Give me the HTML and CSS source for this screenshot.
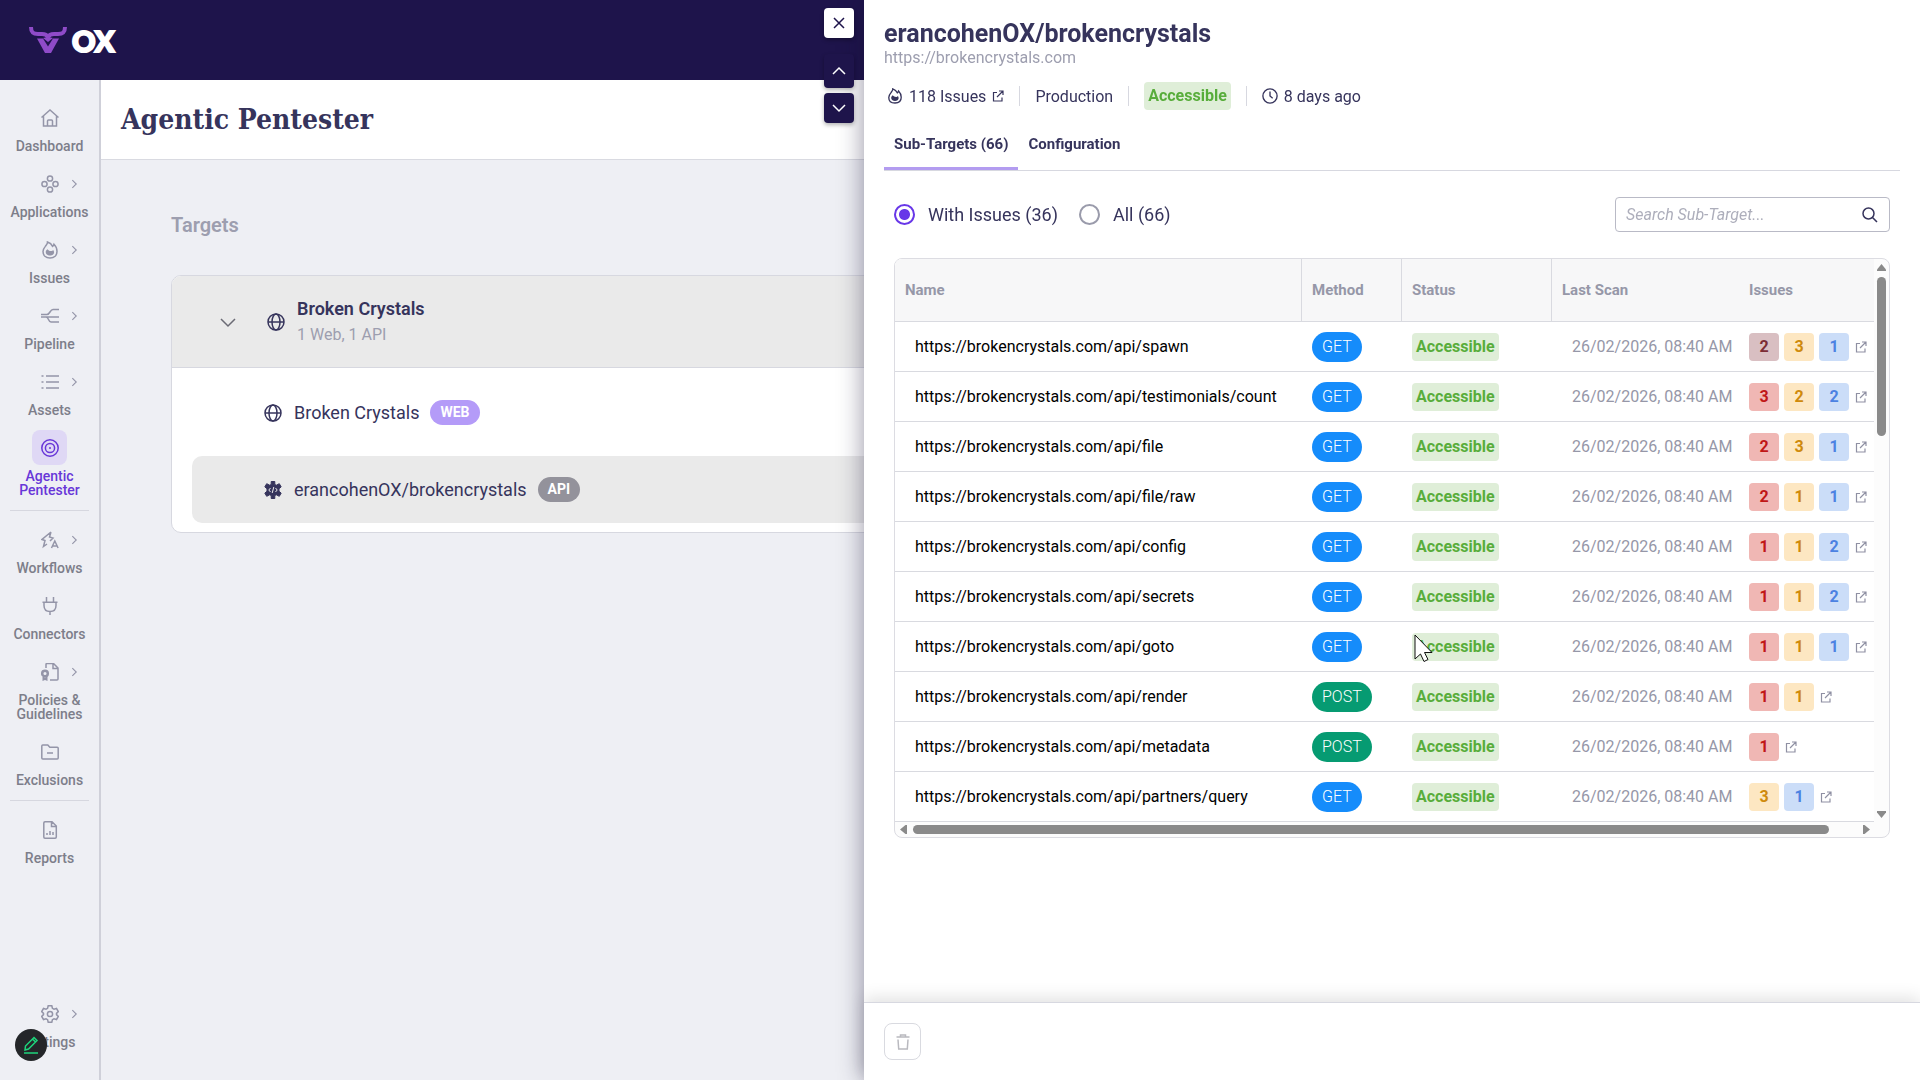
FILE: index.html
```html
<!DOCTYPE html>
<html lang="en">
<head>
  <meta charset="UTF-8">
  <meta name="viewport" content="width=device-width, initial-scale=1.0">
  <title>Agentic Pentester</title>
  <link rel="stylesheet" href="styles.css">
</head>
<body>
  <!-- shared icons -->
  <svg class="sprite" aria-hidden="true">
    <symbol id="chevron" viewBox="0 0 18 18"><path d="M6 2l7 7-7 7"/></symbol>
    <symbol id="flame" viewBox="0 0 18 18">
      <path d="M6.500 1c.2 1.800-1 2.800-2.200 4.400C3 7 2 8.500 2 10.600c0 3.700 2.700 6.300 7 6.300s7-2.600 7-6.500c0-3-1.200-5.300-3-7.100-.3 1.200-.7 1.700-1.400 2.100C10.700 3.400 8.600 1.700 6.500 1z"/>
      <path class="solid" d="M6.500 8.200c-1.400 1-2 2.100-1.700 3.500.4 1.800 2 2.800 4.200 2.800s4.100-1.200 4.100-3c0-.9-.3-1.700-.9-2.400-.5.700-1 1-1.700 1-1.600.1-3-.6-4-1.900z"/>
    </symbol>
    <symbol id="globe" viewBox="0 0 18 18">
      <circle cx="9" cy="9" r="8"/><ellipse cx="9" cy="9" rx="4" ry="8"/><path d="M1 9h16"/>
    </symbol>
    <symbol id="external" viewBox="0 0 12 12"><path d="M5 2.500H1.500v8.500h8.500V7.500M7 1h4v4M11 1L5 7"/></symbol>
  </svg>

  <header class="topbar">
    <svg class="logo-mark" viewBox="0 0 38 28">
      <path class="horns" d="M2 1c0 6 3 7 7 7h4c3 0 5 1 6 3 1-2 3-3 6-3h4c4 0 7-1 7-7"/>
      <path class="face" d="M8 12.500h6l5 8 5-8h6l-8 14.500h-6z"/>
      <path class="face" d="M14 12l5 4 5-4-5-1z"/>
    </svg>
    <span class="logo-text">OX</span>
  </header>

  <div class="layout">
    <nav class="sidebar">
      <a class="nav-item" href="#">
        <span class="nav-icon"><svg class="icon" viewBox="0 0 18 18"><path d="M.5 8.500L9 1l8.500 7.500M2.500 7v10h13V7M6.500 17v-5q0-1 1-1h3q1 0 1 1v5"/></svg></span>
        Dashboard
      </a>
      <a class="nav-item" href="#">
        <span class="nav-icon"><svg class="icon" viewBox="0 0 18 18"><circle cx="9" cy="3.500" r="2.600"/><circle cx="3.500" cy="9" r="2.600"/><circle cx="14.500" cy="9" r="2.600"/><circle cx="9" cy="14.500" r="2.600"/></svg><svg class="more"><use href="#chevron"/></svg></span>
        Applications
      </a>
      <a class="nav-item" href="#">
        <span class="nav-icon"><svg class="icon"><use href="#flame"/></svg><svg class="more"><use href="#chevron"/></svg></span>
        Issues
      </a>
      <a class="nav-item" href="#">
        <span class="nav-icon"><svg class="icon" viewBox="0 0 18 18"><path d="M0 7.500h6c3 0 3-5 6-5h6M0 10h18M5 10c3 0 2 5 5 5h8"/></svg><svg class="more"><use href="#chevron"/></svg></span>
        Pipeline
      </a>
      <a class="nav-item" href="#">
        <span class="nav-icon"><svg class="icon" viewBox="0 0 18 18"><path d="M5 3h13M5 9h13M5 15h13M.5 3h2M.5 9h2M.5 15h2"/></svg><svg class="more"><use href="#chevron"/></svg></span>
        Assets
      </a>
      <a class="nav-item active" href="#">
        <span class="nav-icon"><svg class="icon" viewBox="0 0 18 18"><circle cx="9" cy="9" r="8.200"/><circle cx="9" cy="9" r="4.600"/><circle class="solid" cx="9" cy="9" r="1"/></svg></span>
        Agentic Pentester
      </a>
      <hr class="nav-line">
      <a class="nav-item" href="#">
        <span class="nav-icon"><svg class="icon" viewBox="0 0 18 18"><path d="M10 1L1 8.500l3 1L2.500 15.500 6 13M10 1L8.500 6l3.500 1-3 3M10.500 17l3.300-7 3.300 7M11.500 15h4.500"/></svg><svg class="more"><use href="#chevron"/></svg></span>
        Workflows
      </a>
      <a class="nav-item" href="#">
        <span class="nav-icon"><svg class="icon" viewBox="0 0 18 18"><path d="M5.500 0v5M12.500 0v5M1.500 5.200h15M3 5.500v3c0 4 2.500 6 6 6s6-2 6-6v-3M9 14.500V18"/></svg></span>
        Connectors
      </a>
      <a class="nav-item" href="#">
        <span class="nav-icon"><svg class="icon" viewBox="0 0 18 18"><path d="M5 5V1.500q0-1 1-1h6.500L17 5v11q0 1-1 1H9M12 1v4.500h4.500"/><circle class="seal" cx="4" cy="10.500" r="2.800"/><path class="solid" d="M1.500 13.500v4.500L4 17l2.500 1v-4.500L4 14.500z"/></svg><svg class="more"><use href="#chevron"/></svg></span>
        Policies &amp; Guidelines
      </a>
      <a class="nav-item" href="#">
        <span class="nav-icon"><svg class="icon" viewBox="0 0 18 18"><path d="M.800 3q0-1 1-1h5l2 2.300h7.400q1 0 1 1V15q0 1-1 1H1.800q-1 0-1-1zM6 10h6"/></svg></span>
        Exclusions
      </a>
      <hr class="nav-line">
      <a class="nav-item" href="#">
        <span class="nav-icon"><svg class="icon" viewBox="0 0 18 18"><path d="M2.800 2q0-1.200 1.200-1.200h7L15.300 5v11q0 1.200-1.200 1.200H4q-1.200 0-1.200-1.200zM10.500 1v4.500H15M6 14v-2M9 14v-4M12 14v-3"/></svg></span>
        Reports
      </a>
      <a class="nav-item nav-settings" href="#">
        <span class="nav-icon"><svg class="icon" viewBox="0 0 18 18"><path d="M7.200.8h3.600l.6 2.500 1.600.9 2.500-.7 1.800 3.100L15.500 8.400v1.200l1.800 1.800-1.800 3.100-2.500-.7-1.600.9-.6 2.500H7.200l-.6-2.500-1.600-.9-2.500.7L.700 11.400l1.800-1.800V8.400L.700 6.600l1.800-3.100 2.500.7 1.600-.9z"/><circle cx="9" cy="9" r="2.600"/></svg><svg class="more"><use href="#chevron"/></svg></span>
        Settings
      </a>
      <button class="edit-button" aria-label="Edit">
        <svg viewBox="0 0 16 18"><path d="M2 14l.5-4L11 1.500l3 3L5.500 13zM9.500 3l3 3M1 17h14"/></svg>
      </button>
    </nav>

    <main class="page">
      <div class="page-head"><h1>Agentic Pentester</h1></div>
      <section class="targets">
        <h2>Targets</h2>
        <div class="card">
          <div class="group">
            <svg class="group-arrow"><use href="#chevron"/></svg>
            <svg class="target-icon"><use href="#globe"/></svg>
            <div class="group-text">
              <strong>Broken Crystals</strong>
              <span>1 Web, 1 API</span>
            </div>
          </div>
          <div class="target">
            <svg class="target-icon"><use href="#globe"/></svg>
            <span>Broken Crystals</span>
            <span class="tag web">WEB</span>
          </div>
          <div class="target selected">
            <svg class="target-icon" viewBox="0 0 18 18"><path class="gear" d="M7.200.5h3.600v3l1.500.7 3-1.500 1.900 3.200L15 7.700v2.600l2.200 1.800-1.900 3.200-3-1.500-1.500.7v3H7.200v-3l-1.500-.7-3 1.500L.800 12.100 3 10.300V7.700L.800 5.900l1.900-3.200 3 1.500 1.500-.7z"/><path class="code" d="M6.500 7L4.800 9l1.700 2M11.500 7l1.700 2-1.700 2M9.800 6L8.200 12"/></svg>
            <span>erancohenOX/brokencrystals</span>
            <span class="tag api">API</span>
          </div>
        </div>
      </section>
    </main>
  </div>

  <aside class="drawer">
    <div class="drawer-buttons">
      <button class="close" aria-label="Close"><svg viewBox="0 0 12 12"><path d="M1 1l10 10M11 1L1 11"/></svg></button>
      <button class="prev" aria-label="Previous"><svg viewBox="0 0 12 12"><path d="M0 9l6-6 6 6"/></svg></button>
      <button aria-label="Next"><svg viewBox="0 0 12 12"><path d="M0 3l6 6 6-6"/></svg></button>
    </div>

    <div class="drawer-content">
      <h2 class="drawer-title">erancohenOX/brokencrystals</h2>
      <p class="drawer-url">https://brokencrystals.com</p>
      <div class="info">
        <span class="info-item issues-count">
          <svg class="info-icon"><use href="#flame"/></svg>118 Issues
          <a class="ext" href="#" aria-label="Open issues"><svg><use href="#external"/></svg></a>
        </span>
        <span class="info-item">Production</span>
        <span class="info-item"><span class="status">Accessible</span></span>
        <span class="info-item"><svg class="info-icon" viewBox="0 0 18 18"><circle cx="9" cy="9" r="8"/><path d="M9 4v5l3 2.500"/></svg>8 days ago</span>
      </div>
      <div class="tabs" role="tablist">
        <button class="tab active" role="tab">Sub-Targets (66)</button>
        <button class="tab" role="tab">Configuration</button>
      </div>

      <div class="tab-body">
        <div class="toolbar">
          <label class="radio"><input type="radio" name="filter" checked>With Issues (36)</label>
          <label class="radio"><input type="radio" name="filter">All (66)</label>
          <div class="search">
            <input type="text" placeholder="Search Sub-Target..." aria-label="Search Sub-Target">
            <svg viewBox="0 0 16 16"><circle cx="6.500" cy="6.500" r="5.500"/><path d="M10.500 10.500L15 15"/></svg>
          </div>
        </div>

        <div class="grid">
          <table>
            <thead>
              <tr><th class="col-name">Name</th><th class="col-method">Method</th><th class="col-status">Status</th><th class="col-scan">Last Scan</th><th class="col-issues">Issues</th></tr>
            </thead>
            <tbody>
              <tr>
                <td class="url">https://brokencrystals.com/api/spawn</td>
                <td><span class="method get">GET</span></td>
                <td><span class="status">Accessible</span></td>
                <td class="date">26/02/2026, 08:40 AM</td>
                <td><div class="counts"><span class="count appox">2</span><span class="count medium">3</span><span class="count low">1</span><a class="ext" href="#" aria-label="Open"><svg><use href="#external"/></svg></a></div></td>
              </tr>
              <tr>
                <td class="url">https://brokencrystals.com/api/testimonials/count</td>
                <td><span class="method get">GET</span></td>
                <td><span class="status">Accessible</span></td>
                <td class="date">26/02/2026, 08:40 AM</td>
                <td><div class="counts"><span class="count high">3</span><span class="count medium">2</span><span class="count low">2</span><a class="ext" href="#" aria-label="Open"><svg><use href="#external"/></svg></a></div></td>
              </tr>
              <tr>
                <td class="url">https://brokencrystals.com/api/file</td>
                <td><span class="method get">GET</span></td>
                <td><span class="status">Accessible</span></td>
                <td class="date">26/02/2026, 08:40 AM</td>
                <td><div class="counts"><span class="count high">2</span><span class="count medium">3</span><span class="count low">1</span><a class="ext" href="#" aria-label="Open"><svg><use href="#external"/></svg></a></div></td>
              </tr>
              <tr>
                <td class="url">https://brokencrystals.com/api/file/raw</td>
                <td><span class="method get">GET</span></td>
                <td><span class="status">Accessible</span></td>
                <td class="date">26/02/2026, 08:40 AM</td>
                <td><div class="counts"><span class="count high">2</span><span class="count medium">1</span><span class="count low">1</span><a class="ext" href="#" aria-label="Open"><svg><use href="#external"/></svg></a></div></td>
              </tr>
              <tr>
                <td class="url">https://brokencrystals.com/api/config</td>
                <td><span class="method get">GET</span></td>
                <td><span class="status">Accessible</span></td>
                <td class="date">26/02/2026, 08:40 AM</td>
                <td><div class="counts"><span class="count high">1</span><span class="count medium">1</span><span class="count low">2</span><a class="ext" href="#" aria-label="Open"><svg><use href="#external"/></svg></a></div></td>
              </tr>
              <tr>
                <td class="url">https://brokencrystals.com/api/secrets</td>
                <td><span class="method get">GET</span></td>
                <td><span class="status">Accessible</span></td>
                <td class="date">26/02/2026, 08:40 AM</td>
                <td><div class="counts"><span class="count high">1</span><span class="count medium">1</span><span class="count low">2</span><a class="ext" href="#" aria-label="Open"><svg><use href="#external"/></svg></a></div></td>
              </tr>
              <tr>
                <td class="url">https://brokencrystals.com/api/goto</td>
                <td><span class="method get">GET</span></td>
                <td><span class="status">Accessible</span></td>
                <td class="date">26/02/2026, 08:40 AM</td>
                <td><div class="counts"><span class="count high">1</span><span class="count medium">1</span><span class="count low">1</span><a class="ext" href="#" aria-label="Open"><svg><use href="#external"/></svg></a></div></td>
              </tr>
              <tr>
                <td class="url">https://brokencrystals.com/api/render</td>
                <td><span class="method post">POST</span></td>
                <td><span class="status">Accessible</span></td>
                <td class="date">26/02/2026, 08:40 AM</td>
                <td><div class="counts"><span class="count high">1</span><span class="count medium">1</span><a class="ext" href="#" aria-label="Open"><svg><use href="#external"/></svg></a></div></td>
              </tr>
              <tr>
                <td class="url">https://brokencrystals.com/api/metadata</td>
                <td><span class="method post">POST</span></td>
                <td><span class="status">Accessible</span></td>
                <td class="date">26/02/2026, 08:40 AM</td>
                <td><div class="counts"><span class="count high">1</span><a class="ext" href="#" aria-label="Open"><svg><use href="#external"/></svg></a></div></td>
              </tr>
              <tr>
                <td class="url">https://brokencrystals.com/api/partners/query</td>
                <td><span class="method get">GET</span></td>
                <td><span class="status">Accessible</span></td>
                <td class="date">26/02/2026, 08:40 AM</td>
                <td><div class="counts"><span class="count medium">3</span><span class="count low">1</span><a class="ext" href="#" aria-label="Open"><svg><use href="#external"/></svg></a></div></td>
              </tr>
            </tbody>
          </table>
          <div class="vbar">
            <svg viewBox="0 0 9 7"><path d="M4.500 0L9 5.500V7H0V5.500z"/></svg>
            <div class="track"><div class="thumb"></div></div>
            <svg viewBox="0 0 9 7"><path d="M4.500 7L9 1.500V0H0v1.500z"/></svg>
          </div>
          <div class="hbar">
            <svg viewBox="0 0 7 9"><path d="M0 4.500L5.500 0H7v9H5.500z"/></svg>
            <div class="track"><div class="thumb"></div></div>
            <svg viewBox="0 0 7 9"><path d="M7 4.500L1.500 0H0v9h1.500z"/></svg>
          </div>
        </div>
      </div>
    </div>

    <footer class="drawer-footer">
      <button class="delete" aria-label="Delete"><svg viewBox="0 0 14 16"><path d="M.5 3h13M4.500 2.500V1h5v1.500M2 5.500l.7 9.500h8.600l.7-9.500"/></svg></button>
    </footer>
  </aside>

  <svg class="cursor" viewBox="0 0 19 28"><path d="M1 1v24l5.500-5 3.500 7.500 4-2-3.500-7H18z"/></svg>
</body>
</html>
```
FILE: styles.css
```css
* {
  box-sizing: border-box;
}
body {
  margin: 0;
  min-height: 100vh;
  display: flex;
  flex-direction: column;
  font-family: Roboto, "Liberation Sans", sans-serif;
  font-size: 16px;
  color: #36345c;
  background-color: #eeeff4;
  overflow: hidden;
}
h1, h2, p {
  margin: 0;
}
button {
  font-family: inherit;
  padding: 0;
  border: none;
  cursor: pointer;
}
svg {
  fill: none;
  stroke: currentColor;
  stroke-width: 1.5;
  flex-shrink: 0;
}
.solid {
  fill: currentColor;
  stroke: none;
}
.sprite {
  position: absolute;
  width: 0;
  height: 0;
}

/* top bar */
.topbar {
  height: 80px;
  padding-left: 29px;
  display: flex;
  align-items: center;
  gap: 5px;
  background-color: #1e144b;
}
.logo-mark {
  width: 38px;
  height: 28px;
}
.horns {
  stroke: #8f4bc8;
  stroke-width: 4;
}
.face {
  fill: #8f4bc8;
  stroke: none;
}
.logo-text {
  color: #fff;
  font-family: Lato, sans-serif;
  font-weight: 900;
  font-size: 29px;
  -webkit-text-stroke: 2px #fff;
}

/* sidebar */
.layout {
  flex: 1;
  display: flex;
}
.sidebar {
  position: relative;
  width: 101px;
  padding: 20px 0 18px;
  display: flex;
  flex-direction: column;
  align-items: center;
  border-right: 2px solid #cfd0d9;
}
.nav-item {
  width: 85px;
  margin-bottom: 13px;
  display: flex;
  flex-direction: column;
  align-items: center;
  gap: 4px;
  color: #7d7e8a;
  font-size: 14px;
  font-weight: 500;
  line-height: 14px;
  text-align: center;
  text-decoration: none;
}
.nav-icon {
  position: relative;
  width: 35px;
  height: 35px;
  display: flex;
  align-items: center;
  justify-content: center;
  border-radius: 8px;
  color: #9495a8;
}
.icon {
  width: 18px;
  height: 18px;
}
.more {
  position: absolute;
  left: 37px;
  width: 10px;
  height: 10px;
  stroke-width: 2;
}
.nav-item.active {
  color: #6837d8;
}
.active .nav-icon {
  background-color: #dfd8f5;
  color: #6837d8;
}
.seal {
  stroke-width: 2.5;
}
.nav-line {
  width: 79px;
  height: 1px;
  margin: 0 0 11px;
  border: none;
  background-color: #d6d7df;
}
.nav-settings {
  margin-top: auto;
}
.edit-button {
  position: absolute;
  left: 15px;
  bottom: 19px;
  width: 32px;
  height: 32px;
  border-radius: 50%;
  background-color: #242629;
  color: #1ed47b;
}
.edit-button svg {
  width: 16px;
  height: 18px;
  vertical-align: middle;
}

/* page */
.page {
  flex: 1;
}
.page-head {
  height: 80px;
  padding-left: 20px;
  display: flex;
  align-items: center;
  background-color: #fff;
  border-bottom: 1px solid #d9dae1;
}
.page-head h1 {
  font-family: "Roboto Slab", "DejaVu Serif Condensed", "DejaVu Serif", serif;
  font-size: 28px;
  font-weight: 700;
}
.targets {
  padding: 50px 70px;
}
.targets h2 {
  margin-bottom: 35px;
  color: #9d9eaf;
  font-size: 20px;
  font-weight: 600;
  line-height: 30px;
}
.card {
  padding-bottom: 9px;
  border: 1px solid #d7d8e0;
  border-radius: 10px;
  background-color: #fff;
  overflow: hidden;
}
.group {
  height: 92px;
  padding-left: 47px;
  display: flex;
  align-items: center;
  background-color: #eaeaea;
  border-bottom: 1px solid #d7d8e0;
}
.group-arrow {
  width: 18px;
  height: 18px;
  margin-right: 30px;
  transform: rotate(90deg);
  color: #6b6b75;
}
.target-icon {
  width: 18px;
  height: 18px;
}
.group-text {
  margin-left: 12px;
  display: flex;
  flex-direction: column;
  line-height: 26px;
}
.group-text strong {
  font-size: 18px;
  font-weight: 600;
}
.group-text span {
  color: #9d9eaf;
}
.target {
  height: 67px;
  margin: 11px 20px 0;
  padding-left: 72px;
  display: flex;
  align-items: center;
  border-radius: 10px;
  font-size: 18px;
}
.target .target-icon {
  margin-right: 12px;
}
.target.selected {
  margin-top: 10px;
  background-color: #eaeaea;
}
.gear {
  fill: currentColor;
  stroke-width: 1;
}
.code {
  stroke: #eaeaea;
  stroke-width: 1;
}
.tag {
  height: 25px;
  margin-left: 11px;
  padding: 0 10px;
  border-radius: 13px;
  color: #fff;
  font-size: 14px;
  font-weight: 700;
  line-height: 25px;
}
.web {
  background-color: #b49bf8;
}
.api {
  background-color: #93929b;
}

/* drawer */
.drawer {
  position: fixed;
  top: 0;
  right: 0;
  bottom: 0;
  width: 55%;
  display: flex;
  flex-direction: column;
  background-color: #fff;
  box-shadow: 0 0 24px rgba(20, 15, 50, 0.45);
}
.drawer-buttons {
  position: absolute;
  top: 8px;
  right: 100%;
  margin-right: 10px;
  display: flex;
  flex-direction: column;
  gap: 5px;
}
.drawer-buttons button {
  width: 30px;
  height: 30px;
  display: flex;
  align-items: center;
  justify-content: center;
  border-radius: 4px;
  background-color: #1e144b;
  color: #fff;
  box-shadow: 0 2px 4px rgba(0, 0, 0, 0.3);
}
.drawer-buttons svg {
  width: 12px;
  height: 12px;
  overflow: visible;
}
.drawer-buttons .close {
  background-color: #fff;
  color: #1e144b;
}
.drawer-buttons .prev {
  height: 34px;
  margin-top: 11px;
}
.drawer-content {
  flex: 1;
  padding: 20px 20px 0;
}
.drawer-title {
  font-size: 25px;
  font-weight: 700;
  line-height: 28px;
}
.drawer-url {
  color: #9d9eaf;
  line-height: 20px;
}
.info {
  height: 28px;
  margin-top: 14px;
  padding-left: 3px;
  display: flex;
  align-items: center;
}
.info-item {
  height: 20px;
  padding-right: 15px;
  display: flex;
  align-items: center;
}
.info-item + .info-item {
  padding-left: 15px;
  border-left: 1px solid #d7d8e0;
}
.info-icon {
  width: 16px;
  height: 16px;
  margin-right: 6px;
}
.status {
  display: inline-block;
  height: 28px;
  padding: 0 4px;
  border-radius: 4px;
  background-color: #dfeed8;
  color: #58ad3b;
  font-weight: 700;
  line-height: 28px;
}
.ext {
  display: flex;
  color: #8f90a3;
}
.ext svg {
  width: 12px;
  height: 12px;
  stroke-width: 1.2;
}
.issues-count .ext {
  margin-left: 6px;
  color: inherit;
}
.tabs {
  margin-top: 10px;
  display: flex;
  border-bottom: 1px solid #d7d8e0;
}
.tab {
  height: 50px;
  padding: 0 10px;
  border-bottom: 3px solid transparent;
  background: none;
  color: inherit;
  font-size: 15px;
  font-weight: 700;
}
.tab.active {
  border-bottom-color: #b39cf0;
}
.tab-body {
  padding: 26px 10px 0;
}
.toolbar {
  display: flex;
  align-items: center;
  gap: 21px;
}
.radio {
  display: flex;
  align-items: center;
  gap: 13px;
  font-size: 18px;
}
.radio input {
  appearance: none;
  width: 21px;
  height: 21px;
  margin: 0;
  border: 2px solid #9a9bab;
  border-radius: 50%;
}
.radio input:checked {
  border-color: #6837e8;
  background: radial-gradient(circle, #6837e8 5px, #fff 6px);
}
.search {
  width: 275px;
  height: 35px;
  margin-left: auto;
  padding: 0 11px 0 10px;
  display: flex;
  align-items: center;
  border: 1px solid #b9bac6;
  border-radius: 4px;
}
.search input {
  flex: 1;
  min-width: 0;
  padding: 0;
  border: none;
  outline: none;
  font-family: inherit;
  font-size: 16px;
}
.search input::placeholder {
  color: #adaebb;
  font-style: italic;
}
.search svg {
  width: 16px;
  height: 16px;
}

/* sub-targets table */
.grid {
  margin-top: 26px;
  display: grid;
  grid-template-columns: 1fr 15px;
  border: 1px solid #dcdce2;
  border-radius: 8px;
  background-color: #fcfcfc;
  overflow: hidden;
}
table {
  width: 100%;
  table-layout: fixed;
  border-collapse: separate;
  border-spacing: 0;
  background-color: #fff;
}
th {
  height: 63px;
  padding: 0 10px;
  border-bottom: 1px solid #d9dae0;
  background-color: #f7f7f8;
  color: #9697a8;
  font-size: 15px;
  font-weight: 700;
  text-align: left;
}
td {
  height: 50px;
  padding: 0 0 0 10px;
  border-bottom: 1px solid #d9dae0;
}
.col-name, .col-method, .col-status {
  border-right: 1px solid #d9dae0;
}
.col-method {
  width: 100px;
}
.col-status {
  width: 150px;
}
.col-scan {
  width: 187px;
}
.col-issues {
  width: 135px;
}
td.url {
  padding-left: 20px;
  color: #000;
}
td.date {
  padding-left: 20px;
  color: #9697a8;
}
.method {
  display: inline-block;
  height: 30px;
  padding: 0 10px;
  border-radius: 15px;
  color: #fff;
  font-weight: 300;
  line-height: 30px;
}
.get {
  background-color: #158cfb;
}
.post {
  background-color: #069b72;
}
.counts {
  display: flex;
  align-items: center;
  gap: 5px;
}
.counts .ext {
  margin-left: 1px;
}
.count {
  width: 30px;
  height: 28px;
  border-radius: 4px;
  font-weight: 700;
  line-height: 28px;
  text-align: center;
}
.appox {
  background-color: #d9bfc2;
  color: #7c2d35;
}
.high {
  background-color: #f0b7b4;
  color: #c01717;
}
.medium {
  background-color: #fde7c2;
  color: #cf8a0c;
}
.low {
  background-color: #cbddf8;
  color: #4c82e2;
}
.vbar, .hbar {
  display: flex;
  align-items: center;
  gap: 6px;
}
.vbar {
  flex-direction: column;
  padding: 5px 0 4px;
}
.hbar {
  height: 15px;
  padding: 0 4px 0 5px;
}
.vbar svg, .hbar svg {
  fill: #8a8a8a;
  stroke: none;
}
.vbar svg {
  width: 9px;
  height: 7px;
}
.hbar svg {
  width: 7px;
  height: 9px;
}
.track {
  flex: 1;
}
.thumb {
  border-radius: 5px;
  background-color: #8a8a8a;
}
.vbar .thumb {
  width: 9px;
  height: 159px;
}
.hbar .thumb {
  width: 97%;
  height: 9px;
}

.drawer-footer {
  padding: 20px;
  display: flex;
  border-top: 1px solid #d7d8e0;
  box-shadow: 0 -4px 16px rgba(0, 0, 0, 0.12);
}
.delete {
  width: 37px;
  height: 37px;
  display: flex;
  align-items: center;
  justify-content: center;
  border: 1px solid #d9dae0;
  border-radius: 8px;
  background-color: #fff;
  color: #b9b9bf;
}
.delete svg {
  width: 14px;
  height: 16px;
}

/* mouse pointer */
.cursor {
  position: fixed;
  left: 1414px;
  top: 634px;
  width: 19px;
  height: 28px;
  fill: #fff;
  stroke: #111;
  stroke-width: 1;
}
```
